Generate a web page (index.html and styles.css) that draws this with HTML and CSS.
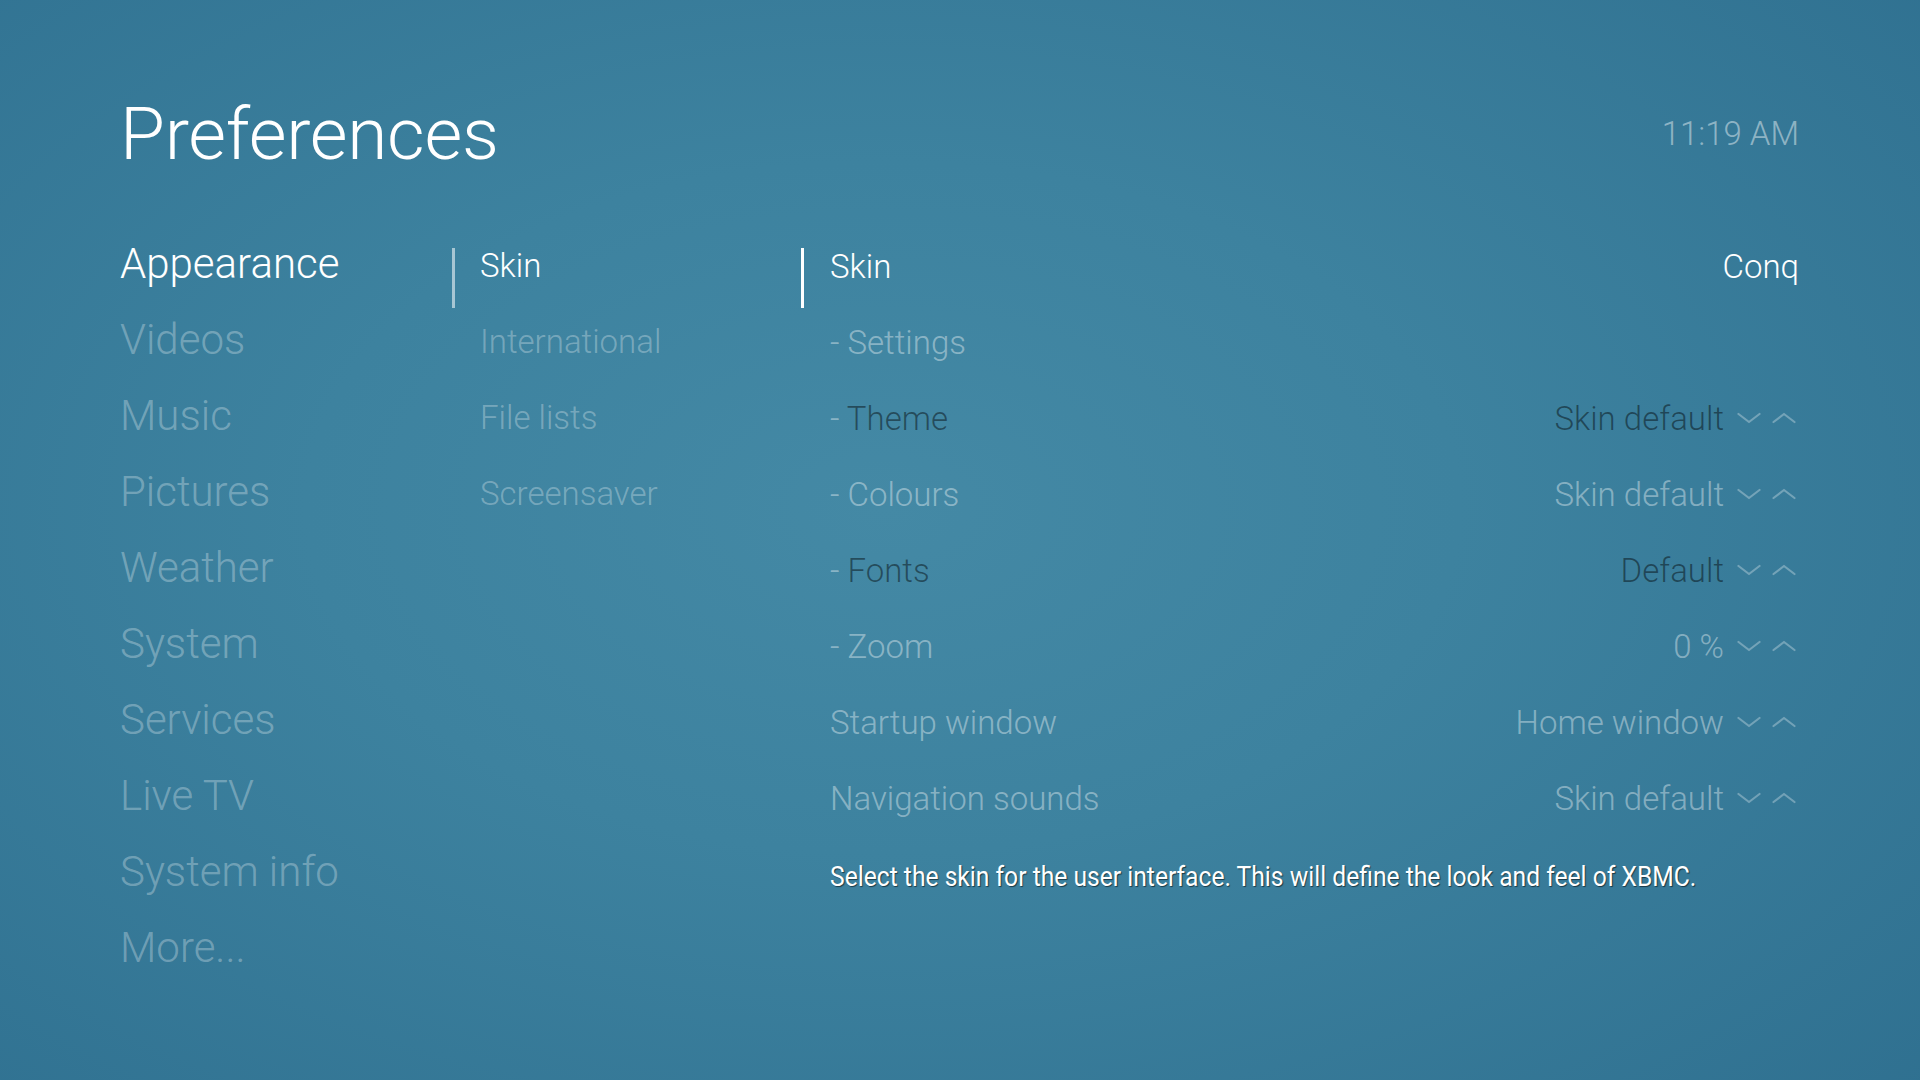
FILE: index.html
```html
<!DOCTYPE html>
<html lang="en">
<head>
<meta charset="utf-8">
<title>Preferences</title>
<link rel="stylesheet" href="styles.css">
</head>
<body>
<div class="screen">
  <header class="header">
    <h1 class="title">Preferences</h1>
    <div class="clock">11:19 AM</div>
  </header>
  <main class="main">
    <nav class="col col-sections">
      <div class="sec active">Appearance</div>
      <div class="sec">Videos</div>
      <div class="sec">Music</div>
      <div class="sec">Pictures</div>
      <div class="sec">Weather</div>
      <div class="sec">System</div>
      <div class="sec">Services</div>
      <div class="sec">Live TV</div>
      <div class="sec">System info</div>
      <div class="sec">More...</div>
    </nav>
    <div class="col col-categories">
      <div class="cat active">Skin</div>
      <div class="cat">International</div>
      <div class="cat">File lists</div>
      <div class="cat">Screensaver</div>
    </div>
    <div class="col col-settings">
      <div class="row active">
        <span class="label">Skin</span>
        <span class="value plain">Conq</span>
      </div>
      <div class="row light">
        <span class="label">- Settings</span>
      </div>
      <div class="row dark">
        <span class="label"><span class="dash">- </span>Theme</span>
        <span class="value">Skin default</span>
        <span class="spin"><svg class="chev" viewBox="0 0 24 12"><polyline points="1.5,2 12,10 22.5,2"/></svg><svg class="chev" viewBox="0 0 24 12"><polyline points="1.5,10 12,2 22.5,10"/></svg></span>
      </div>
      <div class="row light">
        <span class="label">- Colours</span>
        <span class="value">Skin default</span>
        <span class="spin"><svg class="chev" viewBox="0 0 24 12"><polyline points="1.5,2 12,10 22.5,2"/></svg><svg class="chev" viewBox="0 0 24 12"><polyline points="1.5,10 12,2 22.5,10"/></svg></span>
      </div>
      <div class="row dark">
        <span class="label"><span class="dash">- </span>Fonts</span>
        <span class="value">Default</span>
        <span class="spin"><svg class="chev" viewBox="0 0 24 12"><polyline points="1.5,2 12,10 22.5,2"/></svg><svg class="chev" viewBox="0 0 24 12"><polyline points="1.5,10 12,2 22.5,10"/></svg></span>
      </div>
      <div class="row light">
        <span class="label">- Zoom</span>
        <span class="value">0 %</span>
        <span class="spin"><svg class="chev" viewBox="0 0 24 12"><polyline points="1.5,2 12,10 22.5,2"/></svg><svg class="chev" viewBox="0 0 24 12"><polyline points="1.5,10 12,2 22.5,10"/></svg></span>
      </div>
      <div class="row light">
        <span class="label">Startup window</span>
        <span class="value">Home window</span>
        <span class="spin"><svg class="chev" viewBox="0 0 24 12"><polyline points="1.5,2 12,10 22.5,2"/></svg><svg class="chev" viewBox="0 0 24 12"><polyline points="1.5,10 12,2 22.5,10"/></svg></span>
      </div>
      <div class="row light">
        <span class="label">Navigation sounds</span>
        <span class="value">Skin default</span>
        <span class="spin"><svg class="chev" viewBox="0 0 24 12"><polyline points="1.5,2 12,10 22.5,2"/></svg><svg class="chev" viewBox="0 0 24 12"><polyline points="1.5,10 12,2 22.5,10"/></svg></span>
      </div>
      <div class="desc"><span class="desc-text">Select the skin for the user interface. This will define the look and feel of XBMC.</span></div>
    </div>
  </main>
</div>
</body>
</html>
```
FILE: styles.css
```css
html, body {
  margin: 0;
  padding: 0;
  width: 1920px;
  height: 1080px;
  overflow: hidden;
}
body {
  font-family: Roboto, "Noto Sans", sans-serif;
  font-weight: 300;
  color: #fff;
  background: radial-gradient(ellipse 75% 80% at 46% 47%, #4489a5 0%, #3d829f 40%, #2f7090 100%);
}
.screen {
  width: 1920px;
  height: 1080px;
  box-sizing: border-box;
  padding: 84px 121px 0 120px;
}
.header {
  display: flex;
  justify-content: space-between;
  align-items: center;
  height: 100px;
}
.title {
  margin: 0;
  font-size: 73px;
  font-weight: 300;
  line-height: 100px;
  color: #fff;
  letter-spacing: -0.3px;
}
.clock {
  font-size: 33px;
  color: rgba(255, 255, 255, 0.45);
  line-height: 100px;
}
.main {
  display: flex;
  align-items: flex-start;
  margin-top: 42px;
}
.col-sections {
  flex: 0 0 332px;
}
.sec {
  height: 76px;
  line-height: 76px;
  font-size: 42px;
  color: rgba(255, 255, 255, 0.3);
  white-space: nowrap;
}
.sec.active {
  color: #fff;
}
.col-categories {
  flex: 0 0 349px;
  padding-top: 2px;
}
.cat {
  position: relative;
  height: 76px;
  line-height: 76px;
  padding-left: 28px;
  font-size: 33px;
  color: rgba(255, 255, 255, 0.3);
  white-space: nowrap;
}
.cat.active {
  color: #fff;
}
.cat.active::before {
  content: "";
  position: absolute;
  left: 0;
  top: 20px;
  width: 3px;
  height: 60px;
  background: rgba(255, 255, 255, 0.55);
}
.col-settings {
  flex: 1 1 auto;
  min-width: 0;
  padding-top: 2px;
}
.row {
  position: relative;
  display: flex;
  align-items: center;
  height: 76px;
  padding-left: 29px;
  font-size: 33px;
  white-space: nowrap;
}
.row.active {
  color: #fff;
}
.row.active::before {
  content: "";
  position: absolute;
  left: 0;
  top: 20px;
  width: 3px;
  height: 60px;
  background: #fff;
}
.row.light {
  color: rgba(255, 255, 255, 0.4);
}
.row.dark {
  color: rgba(0, 0, 0, 0.44);
}
.row.dark .dash {
  color: rgba(255, 255, 255, 0.4);
}
.label {
  flex: 1;
}
.value.plain {
  color: #fff;
}
.spin {
  display: flex;
  align-items: center;
  gap: 11px;
  margin-left: 13px;
  margin-right: 3px;
}
.chev {
  width: 24px;
  height: 12px;
  fill: none;
  stroke: rgba(255, 255, 255, 0.3);
  stroke-width: 2.2;
  stroke-linecap: round;
  stroke-linejoin: round;
}
.desc {
  height: 76px;
  line-height: 76px;
  padding-top: 3px;
  padding-left: 29px;
  white-space: nowrap;
}
.desc-text {
  display: inline-block;
  font-family: Roboto, sans-serif;
  font-weight: 400;
  font-size: 28px;
  color: #fff;
  text-shadow: 1px 1px 1px rgba(0, 0, 0, 0.55);
  transform: scaleX(0.88);
  transform-origin: left center;
}
```
